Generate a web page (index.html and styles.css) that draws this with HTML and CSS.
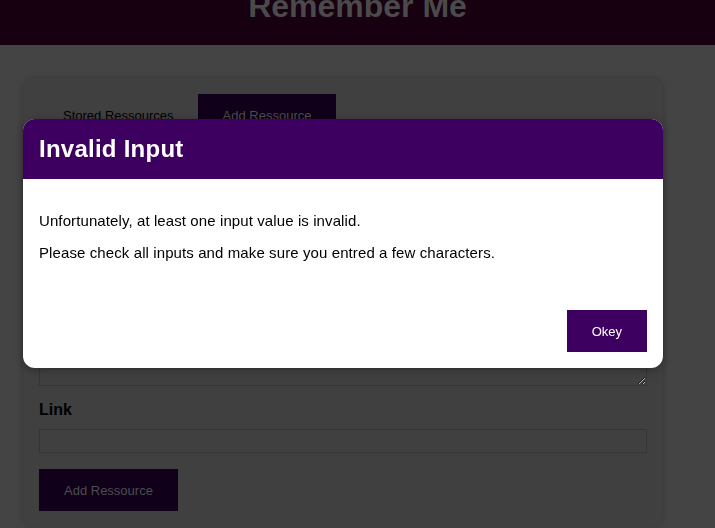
FILE: index.html
```html
<!DOCTYPE html>
<html lang="en">
<head>
<meta charset="utf-8">
<title>Remember Me</title>
<link rel="stylesheet" href="styles.css">
</head>
<body>
<header class="site-header">
  <h1 class="site-title">Remember Me</h1>
</header>
<main class="page">
  <section class="card">
    <nav class="tabs">
      <button class="tab">Stored Ressources</button>
      <button class="tab tab-active">Add Ressource</button>
    </nav>
    <form class="form">
      <label class="label">Title</label>
      <input class="input" type="text">
      <label class="label">Description</label>
      <textarea class="textarea"></textarea>
      <label class="label">Link</label>
      <input class="input" type="text">
      <div class="actions">
        <button type="button" class="btn btn-dim">Add Ressource</button>
      </div>
    </form>
  </section>
</main>
<div class="overlay">
  <div class="modal">
    <div class="modal-header">
      <h2 class="modal-title">Invalid Input</h2>
    </div>
    <div class="modal-body">
      <p>Unfortunately, at least one input value is invalid.</p>
      <p>Please check all inputs and make sure you entred a few characters.</p>
    </div>
    <div class="modal-footer">
      <button class="btn">Okey</button>
    </div>
  </div>
</div>
</body>
</html>
```
FILE: styles.css
```css
* { box-sizing: border-box; }
html, body { margin: 0; padding: 0; }
body {
  background: #444444;
  font-family: "Liberation Sans", Arial, sans-serif;
  color: #000;
  overflow: hidden;
  height: 528px;
}
.site-header {
  display: flow-root;
  height: 45px;
  background: #170010;
  text-align: center;
  overflow: hidden;
}
.site-title {
  margin: -10px 0 0;
  font-size: 32px;
  line-height: 32px;
  font-weight: bold;
  color: #4a4a4a;
}
.page {
  padding: 33px 52px 0 23px;
}
.card {
  width: 640px;
  background: #404040;
  border-radius: 12px;
  box-shadow: 0 0 6px rgba(0,0,0,0.2);
  padding: 16px;
}
.tabs { display: flex; }
.tab {
  height: 42px;
  padding: 0 24px;
  border: 0;
  background: transparent;
  font-family: inherit;
  font-size: 13px;
  color: #000;
}
.tab-active {
  background: #10001a;
  color: #4d4d4d;
  padding: 0 25px;
}
.form {
  display: flex;
  flex-direction: column;
  margin-top: 16px;
}
.label {
  font-size: 16px;
  font-weight: bold;
  line-height: 18px;
  margin-bottom: 10px;
}
.input {
  height: 24px;
  border: 1px solid #353535;
  background: #404040;
  margin: 0 0 16px;
}
.textarea {
  height: 138px;
  border: 1px solid #353535;
  background: #404040;
  margin: 0 0 15px;
  resize: vertical;
}
.actions { display: flex; }
.btn {
  height: 42px;
  padding: 0 25px;
  border: 0;
  background: #3d0060;
  color: #fff;
  font-family: inherit;
  font-size: 13px;
}
.btn-dim {
  background: #10001a;
  color: #4d4d4d;
}
.overlay {
  position: fixed;
  inset: 0;
  padding: 119px 0 0 23px;
}
.modal {
  width: 640px;
  background: #fff;
  border-radius: 12px;
  overflow: hidden;
  box-shadow: 0 2px 8px rgba(0,0,0,0.3);
}
.modal-header {
  height: 60px;
  background: #3d0060;
  display: flex;
  align-items: center;
  padding: 0 16px;
}
.modal-title {
  margin: 0;
  color: #fff;
  font-size: 24px;
  font-weight: bold;
  letter-spacing: 0.25px;
}
.modal-body {
  padding: 33px 16px 33px;
  font-size: 15px;
  letter-spacing: 0.1px;
}
.modal-body p { margin: 0 0 15px; }
.modal-body p:last-child { margin-bottom: 0; }
.modal-footer {
  display: flex;
  justify-content: flex-end;
  padding: 16px;
}
```
